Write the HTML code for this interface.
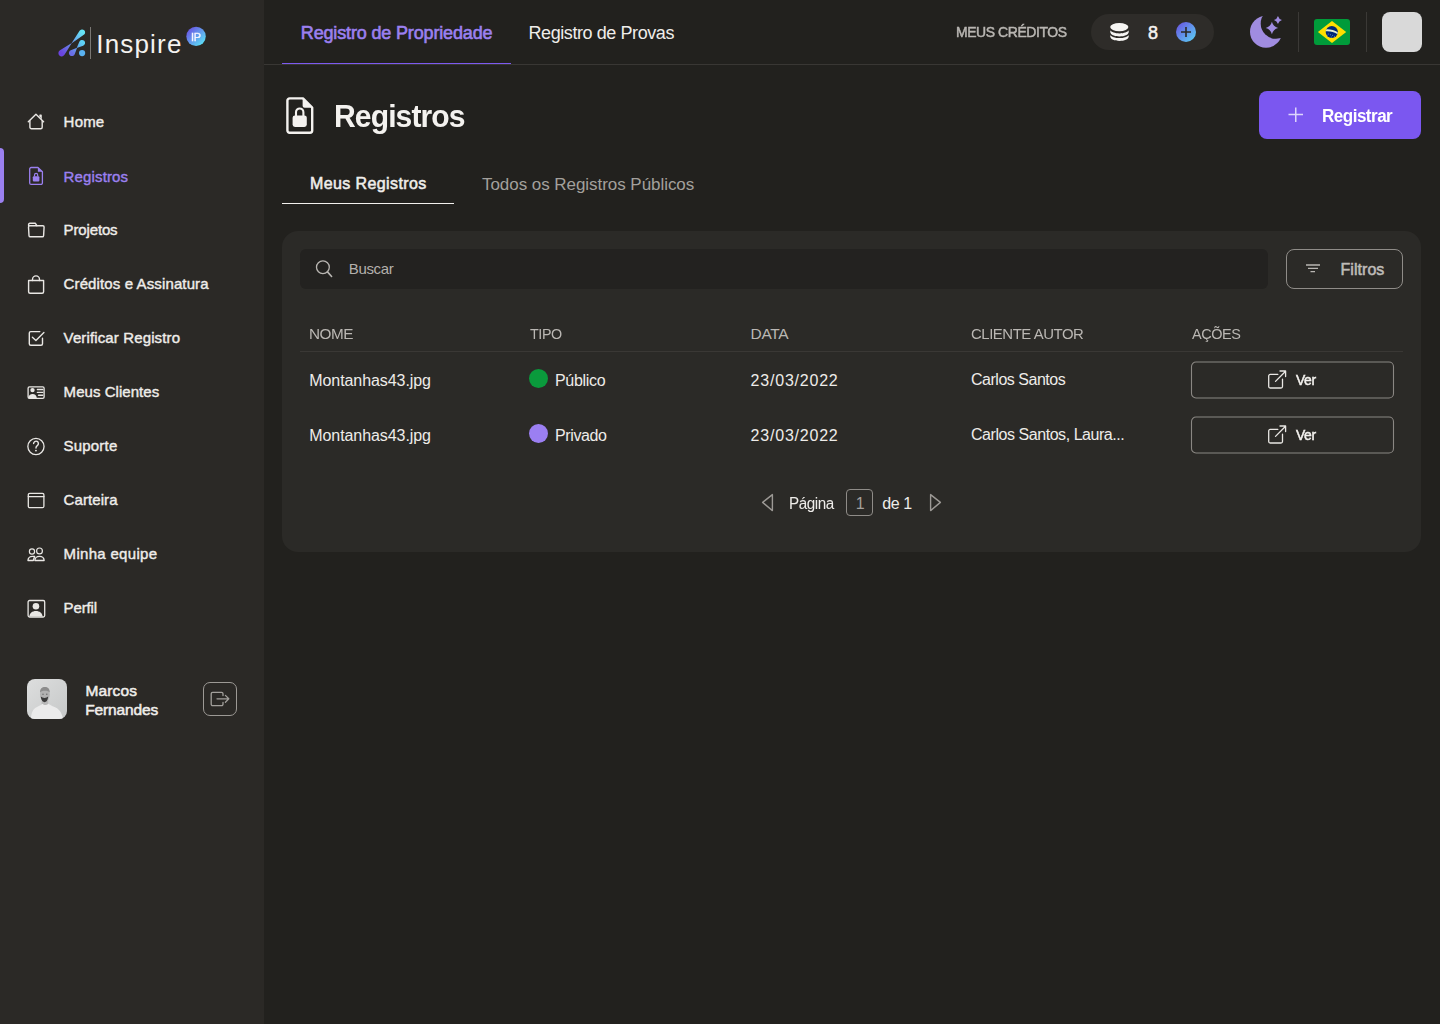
<!DOCTYPE html>
<html><head><meta charset="utf-8">
<style>
*{box-sizing:border-box;margin:0;padding:0}
html,body{width:1440px;height:1024px;overflow:hidden;background:#22211e;font-family:"Liberation Sans",sans-serif}
.abs{position:absolute}
.t{position:absolute;white-space:nowrap}
svg{overflow:visible}
</style></head><body>
<div class="abs" style="left:0px;top:0px;width:264px;height:1024px;background:#2b2926;"></div>
<svg class="abs" style="left:54px;top:25px;" width="36" height="36" viewBox="0 0 36 36"><defs><linearGradient id="lg1" gradientUnits="userSpaceOnUse" x1="7.7" y1="28.1" x2="28.1" y2="7.4"><stop offset="0" stop-color="#6a44df"/><stop offset="1" stop-color="#66e4f6"/></linearGradient><linearGradient id="lg2" gradientUnits="userSpaceOnUse" x1="17.9" y1="28.1" x2="28.1" y2="17.9"><stop offset="0" stop-color="#6a6ee6"/><stop offset="1" stop-color="#5ed2f5"/></linearGradient></defs><path d="M17.40 18.50 L25.58 5.78 A3.0 3.0 0 1 1 29.81 9.86 Z" fill="url(#lg1)"/><path d="M17.80 18.10 L10.50 29.84 A3.3 3.3 0 1 1 5.99 25.28 Z" fill="url(#lg1)"/><path d="M22.70 23.10 L25.33 16.75 A3.0 3.0 0 1 1 29.14 20.71 Z" fill="url(#lg2)"/><path d="M23.10 22.70 L20.71 29.14 A3.0 3.0 0 1 1 16.75 25.33 Z" fill="url(#lg2)"/><circle cx="28.1" cy="28.1" r="3.1" fill="#5ab2f0"/></svg>
<div class="abs" style="left:90px;top:27px;width:1px;height:32px;background:#7a7774;"></div>
<div class="t" style="left:96.30px;top:30.99px;font-size:26px;line-height:26px;color:#f4f2ef;letter-spacing:1.167px;">Inspire</div>
<svg class="abs" style="left:186px;top:26px;" width="20" height="20" viewBox="0 0 20 20"><defs><linearGradient id="ipg" x1="0.1" y1="0.1" x2="0.9" y2="0.9"><stop offset="0" stop-color="#6a52e4"/><stop offset="1" stop-color="#5be4f6"/></linearGradient></defs><circle cx="10.05" cy="10.4" r="9.7" fill="url(#ipg)"/></svg>
<div class="t" style="left:191.20px;top:31.77px;font-size:11.5px;line-height:11.5px;-webkit-text-stroke:0.39px #f4f4ff;color:#f4f4ff;letter-spacing:-0.345px;transform:scaleX(0.9474);transform-origin:0 0;">IP</div>
<div class="abs" style="left:0px;top:148px;width:4px;height:55px;background:#9b80f0;border-radius:0 4px 4px 0;"></div>
<svg class="abs" style="left:22px;top:108px;" width="28" height="28" viewBox="0 0 28 28"><path fill="none" stroke="#e9e7e4" stroke-width="1.4" stroke-linecap="round" stroke-linejoin="round" d="M6.3 13.7 L13.95 6.3 L21.6 13.7"/><path fill="none" stroke="#e9e7e4" stroke-width="1.4" stroke-linecap="round" stroke-linejoin="round" d="M7.9 12.6 V19.3 a1.5 1.5 0 0 0 1.5 1.5 H18.7 a1.5 1.5 0 0 0 1.5 -1.5 V12.6"/><path fill="none" stroke="#e9e7e4" stroke-width="1.4" stroke-linecap="round" stroke-linejoin="round" d="M18 8.3 V7.2 H19.1 V10.3"/></svg>
<svg class="abs" style="left:22px;top:162px;" width="28" height="28" viewBox="0 0 28 28"><path fill="none" stroke="#9b80f0" stroke-width="1.3" stroke-linejoin="round" d="M15.9 5.5 H9.2 a1.5 1.5 0 0 0 -1.5 1.5 V20.9 a1.5 1.5 0 0 0 1.5 1.5 H18.9 a1.5 1.5 0 0 0 1.5 -1.5 V9.8 Z"/><path fill="#9b80f0" d="M15.9 5.5 L20.4 9.8 H15.9 Z"/><rect x="10.8" y="14.2" width="6.6" height="5.4" rx="1.1" fill="#9b80f0"/><path fill="none" stroke="#9b80f0" stroke-width="1.2" d="M12.5 14.6 V12.9 a1.6 1.6 0 0 1 3.2 0 V14.6"/></svg>
<svg class="abs" style="left:22px;top:216px;" width="28" height="28" viewBox="0 0 28 28"><path fill="none" stroke="#e9e7e4" stroke-width="1.4" stroke-linecap="round" stroke-linejoin="round" d="M6.6 9.7 V8.5 a1.2 1.2 0 0 1 1.2 -1.2 H13.4 L14.9 9.7"/><path fill="none" stroke="#e9e7e4" stroke-width="1.4" stroke-linecap="round" stroke-linejoin="round" d="M6.5 10.9 a1.2 1.2 0 0 1 1.2 -1.2 H20.9 a1.2 1.2 0 0 1 1.2 1.2 L21.6 19.6 a1.3 1.3 0 0 1 -1.3 1.2 H8.3 a1.3 1.3 0 0 1 -1.3 -1.2 Z"/></svg>
<svg class="abs" style="left:22px;top:270px;" width="28" height="28" viewBox="0 0 28 28"><path fill="none" stroke="#e9e7e4" stroke-width="1.4" stroke-linecap="round" stroke-linejoin="round" d="M6.6 10.5 H21.6 V21.7 a1.5 1.5 0 0 1 -1.5 1.5 H8.1 a1.5 1.5 0 0 1 -1.5 -1.5 Z"/><path fill="none" stroke="#e9e7e4" stroke-width="1.4" stroke-linecap="round" stroke-linejoin="round" d="M10.5 10.5 V9.4 a3.5 3.5 0 0 1 7 0 V10.5"/></svg>
<svg class="abs" style="left:22px;top:325px;" width="28" height="28" viewBox="0 0 28 28"><path fill="none" stroke="#e9e7e4" stroke-width="1.4" stroke-linecap="round" stroke-linejoin="round" d="M17.8 6.6 H8.8 a1.5 1.5 0 0 0 -1.5 1.5 V18.7 a1.5 1.5 0 0 0 1.5 1.5 H19 a1.5 1.5 0 0 0 1.5 -1.5 V13.2"/><path fill="none" stroke="#e9e7e4" stroke-width="1.4" stroke-linecap="round" stroke-linejoin="round" d="M10.4 12.3 L13.9 15.4 L21.9 7.5"/></svg>
<svg class="abs" style="left:22px;top:378px;" width="28" height="28" viewBox="0 0 28 28"><rect x="6.1" y="8.8" width="16" height="11.6" rx="1.4" fill="none" stroke="#e9e7e4" stroke-width="1.3"/><circle cx="10.5" cy="12.1" r="2.2" fill="#e9e7e4"/><path fill="#e9e7e4" d="M6.3 19.8 C6.6 17.4 8.3 15.9 10.6 15.9 C12.9 15.9 14.6 17.4 14.9 20.3 H6.3 Z"/><path fill="none" stroke="#e9e7e4" stroke-width="1.4" stroke-linecap="round" stroke-linejoin="round" stroke-width="1.2" d="M15.4 11.5 H20.7 M15.4 14.4 H20.7 M16.5 17.3 H20.7"/></svg>
<svg class="abs" style="left:22px;top:432px;" width="28" height="28" viewBox="0 0 28 28"><circle cx="13.95" cy="14.5" r="8.1" fill="none" stroke="#e9e7e4" stroke-width="1.3"/><path fill="none" stroke="#e9e7e4" stroke-width="1.4" stroke-linecap="round" stroke-linejoin="round" stroke-width="1.4" d="M11.6 11.6 a2.4 2.4 0 1 1 3.7 2 c-0.9 0.6 -1.3 1.2 -1.3 2.1 V16"/><circle cx="13.95" cy="18.6" r="0.95" fill="#e9e7e4"/></svg>
<svg class="abs" style="left:22px;top:486px;" width="28" height="28" viewBox="0 0 28 28"><rect x="6.3" y="7.3" width="15.6" height="14.4" rx="1.5" fill="none" stroke="#e9e7e4" stroke-width="1.3"/><path fill="none" stroke="#e9e7e4" stroke-width="1.4" stroke-linecap="round" stroke-linejoin="round" stroke-width="1.3" d="M6.3 10.6 H21.9"/></svg>
<svg class="abs" style="left:22px;top:540px;" width="28" height="28" viewBox="0 0 28 28"><circle cx="10" cy="11.5" r="2.6" fill="none" stroke="#e9e7e4" stroke-width="1.2"/><circle cx="17.5" cy="10.9" r="2.9" fill="none" stroke="#e9e7e4" stroke-width="1.2"/><path fill="none" stroke="#e9e7e4" stroke-width="1.4" stroke-linecap="round" stroke-linejoin="round" stroke-width="1.2" d="M12.6 16.4 H10.5 C8 16.4 6 18.3 6 20.5 H11.3 Z"/><path fill="none" stroke="#e9e7e4" stroke-width="1.4" stroke-linecap="round" stroke-linejoin="round" stroke-width="1.2" d="M12.9 20.5 C12.9 18.2 14.8 16.4 17.5 16.4 C20.2 16.4 22.1 18.2 22.1 20.5 Z"/></svg>
<svg class="abs" style="left:22px;top:594px;" width="28" height="28" viewBox="0 0 28 28"><rect x="6.1" y="6.5" width="16.6" height="16.5" rx="1.5" fill="none" stroke="#e9e7e4" stroke-width="1.3"/><circle cx="13.95" cy="12.2" r="3.3" fill="#e9e7e4"/><path fill="#e9e7e4" d="M7.3 22.6 C7.6 19.3 10.2 17.1 13.95 17.1 C17.7 17.1 20.3 19.3 20.6 22.6 Z"/></svg>
<div class="t" style="left:63.60px;top:114.30px;font-size:15px;line-height:15px;-webkit-text-stroke:0.40px #efedea;color:#efedea;letter-spacing:0.200px;">Home</div>
<div class="t" style="left:63.60px;top:169.30px;font-size:15px;line-height:15px;-webkit-text-stroke:0.40px #9b80f0;color:#9b80f0;letter-spacing:0.138px;">Registros</div>
<div class="t" style="left:63.60px;top:222.30px;font-size:15px;line-height:15px;-webkit-text-stroke:0.40px #efedea;color:#efedea;letter-spacing:-0.143px;">Projetos</div>
<div class="t" style="left:63.60px;top:276.30px;font-size:15px;line-height:15px;-webkit-text-stroke:0.40px #efedea;color:#efedea;letter-spacing:0.120px;">Créditos e Assinatura</div>
<div class="t" style="left:63.60px;top:330.30px;font-size:15px;line-height:15px;-webkit-text-stroke:0.40px #efedea;color:#efedea;letter-spacing:0.129px;">Verificar Registro</div>
<div class="t" style="left:63.60px;top:384.30px;font-size:15px;line-height:15px;-webkit-text-stroke:0.40px #efedea;color:#efedea;letter-spacing:0.050px;">Meus Clientes</div>
<div class="t" style="left:63.60px;top:438.30px;font-size:15px;line-height:15px;-webkit-text-stroke:0.40px #efedea;color:#efedea;letter-spacing:0.183px;">Suporte</div>
<div class="t" style="left:63.60px;top:492.30px;font-size:15px;line-height:15px;-webkit-text-stroke:0.40px #efedea;color:#efedea;letter-spacing:0.086px;">Carteira</div>
<div class="t" style="left:63.60px;top:546.30px;font-size:15px;line-height:15px;-webkit-text-stroke:0.40px #efedea;color:#efedea;letter-spacing:0.309px;">Minha equipe</div>
<div class="t" style="left:63.60px;top:600.30px;font-size:15px;line-height:15px;-webkit-text-stroke:0.40px #efedea;color:#efedea;letter-spacing:-0.120px;">Perfil</div>
<svg class="abs" style="left:27px;top:679px;" width="40" height="40" viewBox="0 0 40 40"><defs><linearGradient id="pg" x1="0" y1="0" x2="1" y2="1"><stop offset="0" stop-color="#dddede"/><stop offset="1" stop-color="#c6c8c8"/></linearGradient>
<clipPath id="pc"><rect x="0" y="0" width="40" height="40" rx="8"/></clipPath></defs>
<g clip-path="url(#pc)"><rect width="40" height="40" fill="url(#pg)"/>
<path d="M14.6 20 H21.2 V26.5 H14.6 Z" fill="#b9b9b9"/>
<path d="M3.8 41 C4.2 34 5.8 29.8 10 28 C12.8 26.8 14.4 25.8 15.4 24.8 C16.8 26.3 19.5 26.6 21.4 24.8 C22.8 25.8 24.6 26.8 27.6 28.1 C31.8 29.8 35.2 33.5 36.2 41 Z" fill="#ebebeb"/>
<ellipse cx="17.9" cy="15.4" rx="4.9" ry="6.9" fill="#b1b1b1"/>
<path d="M13 13.5 C13 9.5 15 8 17.9 8 C20.8 8 22.8 9.5 22.8 13.5 C21.5 11.2 14.3 11.2 13 13.5 Z" fill="#8c8c8c"/>
<circle cx="16" cy="15.2" r="0.7" fill="#666"/><circle cx="19.8" cy="15.2" r="0.7" fill="#666"/>
<path d="M13.8 17.6 C14.2 21.8 16.2 23.2 17.6 23.2 C19.1 23.2 20.8 21.8 21.1 17.6 C19.6 19.4 15.5 19.4 13.8 17.6 Z" fill="#3a3a3a"/>
</g></svg>
<div class="t" style="left:85.50px;top:682.88px;font-size:15.5px;line-height:15.5px;-webkit-text-stroke:0.53px #efedea;color:#efedea;letter-spacing:0.140px;">Marcos</div>
<div class="t" style="left:85.20px;top:701.68px;font-size:15.5px;line-height:15.5px;-webkit-text-stroke:0.53px #efedea;color:#efedea;letter-spacing:-0.137px;">Fernandes</div>
<div class="abs" style="left:203px;top:682px;width:34px;height:34px;border-radius:7px;border:1px solid #9c9995;"></div>
<svg class="abs" style="left:196px;top:674px;" width="48" height="48" viewBox="0 0 48 48"><path fill="none" stroke="#a3a09c" stroke-width="1.3" stroke-linecap="round" stroke-linejoin="round" d="M27 21.6 V19.8 a1.4 1.4 0 0 0 -1.4 -1.4 H16.6 a1.4 1.4 0 0 0 -1.4 1.4 V30.2 a1.4 1.4 0 0 0 1.4 1.4 H25.6 a1.4 1.4 0 0 0 1.4 -1.4 V28.4"/><path fill="none" stroke="#a3a09c" stroke-width="1.3" stroke-linecap="round" stroke-linejoin="round" d="M21 24.8 H32.6 M29.4 21.4 L32.8 24.8 L29.4 28.2"/></svg>
<div class="abs" style="left:264px;top:64px;width:1176px;height:1px;background:#393734;"></div>
<div class="t" style="left:300.80px;top:23.96px;font-size:18px;line-height:18px;-webkit-text-stroke:0.61px #9b80f0;color:#9b80f0;letter-spacing:-0.155px;">Registro de Propriedade</div>
<div class="abs" style="left:282px;top:63px;width:229px;height:1px;background:#7d5af0;"></div>
<div class="t" style="left:528.50px;top:23.56px;font-size:18px;line-height:18px;color:#efedea;letter-spacing:-0.418px;">Registro de Provas</div>
<div class="t" style="left:955.70px;top:25.15px;font-size:14px;line-height:14px;-webkit-text-stroke:0.48px #b9b6b2;color:#b9b6b2;letter-spacing:-0.420px;transform:scaleX(0.9968);transform-origin:0 0;">MEUS CRÉDITOS</div>
<div class="abs" style="left:1091px;top:14px;width:123px;height:36px;background:#2e2c29;border-radius:18px;"></div>
<svg class="abs" style="left:1110px;top:14px;" width="20" height="30" viewBox="0 0 20 30"><ellipse cx="9.3" cy="13.1" rx="9.1" ry="4.2" fill="#f6f5f3"/>
<path d="M0.3 18.2 C0.6 20.6 4.6 22.4 9.5 22.4 C14.4 22.4 18.4 20.6 18.7 18.2 V16.3 C17.6 18.2 14 19.4 9.5 19.4 C5 19.4 1.4 18.2 0.3 16.3 Z" fill="#f6f5f3"/>
<path d="M0.3 22.8 C0.6 25.2 4.6 27 9.5 27 C14.4 27 18.4 25.2 18.7 22.8 V20.9 C17.6 22.8 14 24 9.5 24 C5 24 1.4 22.8 0.3 20.9 Z" fill="#f6f5f3"/></svg>
<div class="t" style="left:1148.00px;top:23.86px;font-size:18px;line-height:18px;-webkit-text-stroke:0.49px #f4f2ef;color:#f4f2ef;letter-spacing:0.000px;">8</div>
<div class="abs" style="left:1176px;top:22px;width:20px;height:20px;border-radius:50%;background:linear-gradient(135deg,#6a4de0 0%,#5ad6f5 100%)"></div>
<svg class="abs" style="left:1176px;top:22px;" width="20" height="20" viewBox="0 0 20 20"><path d="M5 10 H15 M10 5 V15" stroke="#2b2926" stroke-width="1.6" stroke-linecap="butt"/></svg>
<svg class="abs" style="left:1244px;top:10px;" width="44" height="44" viewBox="0 0 44 44"><defs><mask id="mm"><rect x="0" y="0" width="44" height="44" fill="#fff"/><circle cx="32" cy="13.5" r="15.3" fill="#000"/></mask></defs>
<circle cx="22" cy="21.8" r="16" fill="#a08ce0" mask="url(#mm)"/>
<path d="M27.9 11.8 Q29.2 16.7 34.1 18.0 Q29.2 19.3 27.9 24.2 Q26.599999999999998 19.3 21.7 18.0 Q26.599999999999998 16.7 27.9 11.8 Z" fill="#a08ce0"/>
<path d="M33.95 5.9 Q34.85 9.0 37.95 9.9 Q34.85 10.8 33.95 13.9 Q33.050000000000004 10.8 29.950000000000003 9.9 Q33.050000000000004 9.0 33.95 5.9 Z" fill="#a08ce0"/></svg>
<div class="abs" style="left:1298px;top:12px;width:1px;height:40px;background:#3b3936;"></div>
<svg class="abs" style="left:1314px;top:19px;" width="36" height="26" viewBox="0 0 36 26"><rect x="0" y="0" width="36" height="26" rx="3" fill="#009b3a"/>
<path d="M3.9 13 L18 1.9 L32.2 13 L18 24.1 Z" fill="#fedf00"/>
<circle cx="17.8" cy="13" r="6.1" fill="#002776"/>
<clipPath id="gc"><circle cx="17.8" cy="13" r="6.1"/></clipPath><g clip-path="url(#gc)"><path d="M10.5 10.6 C15 9.8 20.5 10.8 25 14.2 L24.6 16 C20.2 12.7 15 11.8 10.5 12.5 Z" fill="#e2ecd2"/>
<circle cx="14.2" cy="15" r="0.5" fill="#6aa0e0"/><circle cx="16.4" cy="15.8" r="0.5" fill="#6aa0e0"/><circle cx="18.6" cy="16.2" r="0.5" fill="#6aa0e0"/><circle cx="17.4" cy="18" r="0.5" fill="#6aa0e0"/><circle cx="20.6" cy="17.2" r="0.5" fill="#6aa0e0"/><circle cx="13" cy="16.8" r="0.5" fill="#6aa0e0"/><circle cx="20.8" cy="13.4" r="0.45" fill="#6aa0e0"/></g></svg>
<div class="abs" style="left:1366px;top:12px;width:1px;height:40px;background:#3b3936;"></div>
<div class="abs" style="left:1382px;top:12px;width:40px;height:40px;background:#d9d9d9;border-radius:8px;"></div>
<svg class="abs" style="left:286px;top:96.5px;" width="28" height="37" viewBox="0 0 28 37"><path fill="none" stroke="#f4f2ef" stroke-width="2.4" stroke-linejoin="round" d="M17 1.4 H3.6 a2.2 2.2 0 0 0 -2.2 2.2 V33.6 a2.2 2.2 0 0 0 2.2 2.2 H24 a2.2 2.2 0 0 0 2.2 -2.2 V10.5 Z"/>
<path d="M16.6 1 L26.6 10.8 H18.6 a2 2 0 0 1 -2 -2 Z" fill="#f4f2ef"/>
<rect x="6.6" y="18.4" width="14.2" height="11.5" rx="2.4" fill="#f4f2ef"/>
<path d="M10 19 V15.2 a3.7 3.7 0 0 1 7.4 0 V19" fill="none" stroke="#f4f2ef" stroke-width="2.1"/></svg>
<div class="t" style="left:333.90px;top:99.61px;font-size:32px;line-height:32px;font-weight:bold;color:#f4f2ef;letter-spacing:-0.960px;transform:scaleX(0.9405);transform-origin:0 0;">Registros</div>
<div class="abs" style="left:1259px;top:91px;width:162px;height:48px;background:#7b57f0;border-radius:8px;"></div>
<svg class="abs" style="left:1288px;top:107px;" width="16" height="16" viewBox="0 0 16 16"><path d="M0.5 7.5 H15 M7.75 0.5 V15" stroke="#ddd5fb" stroke-width="1.5"/></svg>
<div class="t" style="left:1321.60px;top:106.66px;font-size:18px;line-height:18px;font-weight:bold;color:#ffffff;letter-spacing:-0.540px;transform:scaleX(0.9467);transform-origin:0 0;">Registrar</div>
<div class="t" style="left:310.00px;top:176.46px;font-size:16px;line-height:16px;-webkit-text-stroke:0.54px #efedea;color:#efedea;letter-spacing:0.400px;">Meus Registros</div>
<div class="abs" style="left:282px;top:203px;width:172px;height:1px;background:#f2f0ee;"></div>
<div class="t" style="left:482.00px;top:175.91px;font-size:17px;line-height:17px;color:#a3a09c;letter-spacing:-0.050px;">Todos os Registros Públicos</div>
<div class="abs" style="left:282px;top:231px;width:1139px;height:321px;background:#2b2a27;border-radius:16px;"></div>
<div class="abs" style="left:300px;top:249px;width:968px;height:40px;background:#232220;border-radius:6px;"></div>
<svg class="abs" style="left:312px;top:256px;" width="24" height="24" viewBox="0 0 24 24"><circle cx="10.9" cy="11.2" r="6.4" fill="none" stroke="#b9b6b2" stroke-width="1.3"/><path d="M15.5 15.9 L19.6 20.5" stroke="#b9b6b2" stroke-width="1.6" stroke-linecap="round"/></svg>
<div class="t" style="left:348.80px;top:261.20px;font-size:15px;line-height:15px;color:#b3b0ac;letter-spacing:-0.340px;">Buscar</div>
<div class="abs" style="left:1286px;top:249px;width:117px;height:40px;border-radius:8px;border:1px solid #8f8c88;"></div>
<svg class="abs" style="left:1300px;top:256px;" width="28" height="24" viewBox="0 0 28 24"><path d="M6 9 H20 M8 12.3 H18 M10.5 15.7 H15" stroke="#b9b6b2" stroke-width="1.3"/></svg>
<div class="t" style="left:1340.50px;top:262.26px;font-size:16px;line-height:16px;-webkit-text-stroke:0.54px #bfbcb8;color:#bfbcb8;letter-spacing:0.050px;">Filtros</div>
<div class="t" style="left:309.30px;top:326.08px;font-size:15.5px;line-height:15.5px;color:#bab7b3;letter-spacing:-0.465px;transform:scaleX(0.9866);transform-origin:0 0;">NOME</div>
<div class="t" style="left:530.00px;top:326.08px;font-size:15.5px;line-height:15.5px;color:#bab7b3;letter-spacing:-0.465px;transform:scaleX(0.9252);transform-origin:0 0;">TIPO</div>
<div class="t" style="left:750.60px;top:326.08px;font-size:15.5px;line-height:15.5px;color:#bab7b3;letter-spacing:-0.367px;">DATA</div>
<div class="t" style="left:971.00px;top:326.08px;font-size:15.5px;line-height:15.5px;color:#bab7b3;letter-spacing:-0.465px;transform:scaleX(0.9623);transform-origin:0 0;">CLIENTE AUTOR</div>
<div class="t" style="left:1191.50px;top:326.08px;font-size:15.5px;line-height:15.5px;color:#bab7b3;letter-spacing:-0.465px;transform:scaleX(0.9344);transform-origin:0 0;">AÇÕES</div>
<div class="abs" style="left:300px;top:351px;width:1103px;height:1px;background:#3a3835;"></div>
<div class="t" style="left:309.30px;top:372.66px;font-size:16px;line-height:16px;color:#eeece9;letter-spacing:-0.079px;">Montanhas43.jpg</div>
<div class="abs" style="left:529px;top:369px;width:19px;height:19px;background:#0a9a3c;border-radius:10px;"></div>
<div class="t" style="left:555.00px;top:372.66px;font-size:16px;line-height:16px;color:#eeece9;letter-spacing:-0.300px;">Público</div>
<div class="t" style="left:750.60px;top:372.66px;font-size:16px;line-height:16px;color:#eeece9;letter-spacing:0.789px;">23/03/2022</div>
<div class="t" style="left:971.00px;top:372.26px;font-size:16px;line-height:16px;color:#eeece9;letter-spacing:-0.480px;">Carlos Santos</div>
<svg class="abs" style="left:1190px;top:360px;" width="206" height="40" viewBox="0 0 206 40"><rect x="1.5" y="2" width="202" height="36" rx="4.5" fill="none" stroke="#8a8783" stroke-width="1.1"/></svg>
<svg class="abs" style="left:1262px;top:364px;" width="30" height="30" viewBox="0 0 30 30"><path fill="none" stroke="#e9e7e4" stroke-width="1.3" stroke-linecap="round" stroke-linejoin="round" d="M15.8 10.4 H8.2 a1.5 1.5 0 0 0 -1.5 1.5 V22.5 a1.5 1.5 0 0 0 1.5 1.5 H19 a1.5 1.5 0 0 0 1.5 -1.5 V15.2"/><path fill="none" stroke="#e9e7e4" stroke-width="1.3" stroke-linecap="round" stroke-linejoin="round" d="M13.5 17.4 L23.1 7.8 M18 7 H23.6 V12.6"/></svg>
<div class="t" style="left:1295.90px;top:373.45px;font-size:14px;line-height:14px;-webkit-text-stroke:0.48px #f4f2ef;color:#f4f2ef;letter-spacing:-0.420px;transform:scaleX(0.9921);transform-origin:0 0;">Ver</div>
<div class="t" style="left:309.30px;top:427.66px;font-size:16px;line-height:16px;color:#eeece9;letter-spacing:-0.079px;">Montanhas43.jpg</div>
<div class="abs" style="left:529px;top:424px;width:19px;height:19px;background:#9b7ff2;border-radius:10px;"></div>
<div class="t" style="left:555.00px;top:427.66px;font-size:16px;line-height:16px;color:#eeece9;letter-spacing:-0.383px;">Privado</div>
<div class="t" style="left:750.60px;top:427.66px;font-size:16px;line-height:16px;color:#eeece9;letter-spacing:0.789px;">23/03/2022</div>
<div class="t" style="left:971.00px;top:427.26px;font-size:16px;line-height:16px;color:#eeece9;letter-spacing:-0.450px;">Carlos Santos, Laura...</div>
<svg class="abs" style="left:1190px;top:415px;" width="206" height="40" viewBox="0 0 206 40"><rect x="1.5" y="2" width="202" height="36" rx="4.5" fill="none" stroke="#8a8783" stroke-width="1.1"/></svg>
<svg class="abs" style="left:1262px;top:419px;" width="30" height="30" viewBox="0 0 30 30"><path fill="none" stroke="#e9e7e4" stroke-width="1.3" stroke-linecap="round" stroke-linejoin="round" d="M15.8 10.4 H8.2 a1.5 1.5 0 0 0 -1.5 1.5 V22.5 a1.5 1.5 0 0 0 1.5 1.5 H19 a1.5 1.5 0 0 0 1.5 -1.5 V15.2"/><path fill="none" stroke="#e9e7e4" stroke-width="1.3" stroke-linecap="round" stroke-linejoin="round" d="M13.5 17.4 L23.1 7.8 M18 7 H23.6 V12.6"/></svg>
<div class="t" style="left:1295.90px;top:428.45px;font-size:14px;line-height:14px;-webkit-text-stroke:0.48px #f4f2ef;color:#f4f2ef;letter-spacing:-0.420px;transform:scaleX(0.9921);transform-origin:0 0;">Ver</div>
<svg class="abs" style="left:756px;top:488px;" width="24" height="30" viewBox="0 0 24 30"><path fill="none" stroke="#9c9995" stroke-width="1.4" stroke-linejoin="round" d="M6.6 14.4 L16.4 6.6 V22.6 Z"/></svg>
<div class="t" style="left:789.40px;top:495.66px;font-size:16px;line-height:16px;color:#eeece9;letter-spacing:-0.480px;transform:scaleX(0.9536);transform-origin:0 0;">Página</div>
<div class="abs" style="left:846px;top:489px;width:27px;height:27px;border-radius:4px;border:1px solid #8f8c88;"></div>
<div class="t" style="left:855.80px;top:495.66px;font-size:16px;line-height:16px;color:#a3a09c;letter-spacing:0.000px;">1</div>
<div class="t" style="left:882.30px;top:495.66px;font-size:16px;line-height:16px;color:#eeece9;letter-spacing:-0.467px;">de 1</div>
<svg class="abs" style="left:924px;top:488px;" width="24" height="30" viewBox="0 0 24 30"><path fill="none" stroke="#9c9995" stroke-width="1.4" stroke-linejoin="round" d="M16.4 14.4 L6.6 6.6 V22.6 Z"/></svg>
</body></html>
